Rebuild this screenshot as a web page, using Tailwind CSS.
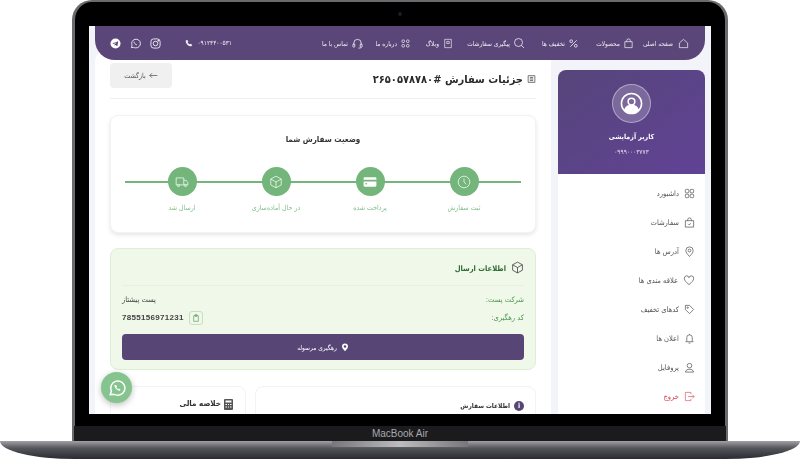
<!DOCTYPE html>
<html lang="fa">
<head>
<meta charset="UTF-8">
<title>جزئیات سفارش</title>
<script src="https://cdn.jsdelivr.net/npm/@tailwindcss/browser@4"></script>
</head>
<body class="bg-white">
<div class="relative w-[800px] h-[459px] overflow-hidden bg-white font-['DejaVu_Sans_Condensed','DejaVu_Sans',sans-serif]">

  <!-- laptop lid -->
  <div class="mx-[72px] w-[656px] h-[441px] rounded-t-[20px] bg-black border-x-[3px] border-t-[2px] border-[#6a6a6e] flex flex-col">
    <div class="h-[24px] flex items-center justify-center shrink-0"><span class="w-[4px] h-[4px] rounded-full bg-[#1c1c22]"></span></div>

    <!-- screen -->
    <div dir="rtl" class="mx-[14px] w-[622px] h-[388px] shrink-0 overflow-hidden bg-[#f3f4f9] px-[6px] blur-[0.45px]">
      <!-- top nav -->
      <div class="relative z-10 h-[34px] bg-[#5a4678] rounded-b-[20px] flex items-center pr-[16px] text-white/90 text-[6.5px]">
        <div class="flex items-center gap-[5px] w-[52px]">
          <svg class="w-[11px] h-[11px] shrink-0" viewBox="0 0 24 24" fill="none" stroke="currentColor" stroke-width="1.6"><path d="M3 11l9-8 9 8v10H3z"/></svg><span class="pt-[4px]">صفحه اصلی</span>
        </div>
        <div class="flex items-center gap-[3px] w-[54px] mr-[3px]">
          <svg class="w-[11px] h-[11px] shrink-0" viewBox="0 0 24 24" fill="none" stroke="currentColor" stroke-width="1.6"><path d="M4 8h16v13H4zM8 8V6a4 4 0 018 0v2"/></svg><span class="pt-[4px]">محصولات</span>
        </div>
        <div class="flex items-center gap-[3px] w-[54px] mr-[1px]">
          <svg class="w-[11px] h-[11px] shrink-0" viewBox="0 0 24 24" fill="none" stroke="currentColor" stroke-width="1.8"><path d="M19 5L5 19"/><circle cx="7" cy="7" r="3"/><circle cx="17" cy="17" r="3"/></svg><span class="pt-[4px]">تخفیف ها</span>
        </div>
        <div class="flex items-center gap-[3px] w-[72px]">
          <svg class="w-[12px] h-[12px] shrink-0" viewBox="0 0 24 24" fill="none" stroke="currentColor" stroke-width="1.6"><circle cx="11" cy="11" r="8"/><path d="M17 17l5 5"/></svg><span class="pt-[4px]">پیگیری سفارشات</span>
        </div>
        <div class="flex items-center gap-[4px] w-[42px]">
          <svg class="w-[10px] h-[11px] shrink-0" viewBox="0 0 24 24" fill="none" stroke="currentColor" stroke-width="1.6"><path d="M4 2h16v20H4zM9 7h6v5H9z"/></svg><span class="pt-[4px]">وبلاگ</span>
        </div>
        <div class="flex items-center gap-[3px] w-[48px]">
          <svg class="w-[11px] h-[11px] shrink-0" viewBox="0 0 24 24" fill="none" stroke="currentColor" stroke-width="1.6"><circle cx="7" cy="7" r="3"/><circle cx="17" cy="7" r="3"/><circle cx="7" cy="17" r="3"/><circle cx="17" cy="17" r="3"/></svg><span class="pt-[4px]">درباره ما</span>
        </div>
        <div class="flex items-center gap-[4px]">
          <svg class="w-[11px] h-[11px] shrink-0" viewBox="0 0 24 24" fill="none" stroke="currentColor" stroke-width="1.8"><path d="M4 15v-4a8 8 0 0116 0v4"/><rect x="2" y="13" width="4" height="7" rx="1.5"/><rect x="18" y="13" width="4" height="7" rx="1.5"/><path d="M20 20c0 2-3 2-6 2"/></svg><span class="pt-[4px]">تماس با ما</span>
        </div>
        <div class="flex items-center gap-[4px] mr-[90px] text-[6.5px]">
          <span class="pt-[2px]">۰۹۱۲۴۴۰۰۵۳۱</span>
          <svg class="w-[8px] h-[8px] shrink-0" viewBox="0 0 24 24" fill="currentColor"><path d="M6 2l4 5-2 3c1 3 3 5 6 6l3-2 5 4-3 4C10 22 2 14 2 5z"/></svg>
        </div>
        <div class="flex items-center gap-[9px] mr-[24px]">
          <svg class="w-[11px] h-[11px]" viewBox="0 0 24 24" fill="none" stroke="currentColor" stroke-width="2"><rect x="2" y="2" width="20" height="20" rx="6"/><circle cx="12" cy="12" r="5"/><circle cx="18" cy="6" r="1" fill="currentColor"/></svg>
          <svg class="w-[11px] h-[11px]" viewBox="0 0 24 24" fill="none" stroke="currentColor" stroke-width="2"><path d="M3 21l1.500-5A9.500 9.500 0 1112 21.500a9.500 9.500 0 01-4-1z"/><path d="M9 8c-1 2 3 7 6 7"/></svg>
          <svg class="w-[11px] h-[11px]" viewBox="0 0 24 24"><circle cx="12" cy="12" r="11" fill="#fff"/><path d="M5 12l13-5-2 11-4-3-2 2v-3l5-5-7 4z" fill="#5a4678"/></svg>
        </div>
      </div>

      <div class="flex gap-[7px] -mt-[10px]">
        <!-- sidebar -->
        <div class="w-[147px] shrink-0 pt-[20px]">
          <div class="bg-white rounded-[8px] h-[360px] overflow-hidden">
            <div class="h-[104px] bg-linear-to-br from-[#56457a] to-[#614295] flex flex-col items-center pt-[14px] text-white">
              <div class="w-[39px] h-[39px] rounded-full bg-white/20 border border-white/40 flex items-center justify-center">
                <svg class="w-[23px] h-[23px]" viewBox="0 0 24 24" fill="none" stroke="#fff" stroke-width="1.6"><circle cx="12" cy="12" r="10.500"/><circle cx="12" cy="10" r="3.500"/><path d="M5 19c1-4 4-5 7-5s6 1 7 5c-2 2-4 3-7 3s-5-1-7-3z" fill="#fff"/></svg>
              </div>
              <div class="mt-[8px] text-[7px] font-bold leading-[12px]">کاربر آزمایشی</div>
              <div class="mt-[5px] text-[6.5px] leading-[8px] text-white/80">۰۹۹۹۰۰۰۳۷۷۳</div>
            </div>
            <div class="pt-[5px] text-[7.5px] text-[#555]">
              <div class="h-[29px] flex items-center gap-[5px] pr-[10px]"><svg class="w-[11px] h-[11px] shrink-0" viewBox="0 0 24 24" fill="none" stroke="#555" stroke-width="1.6"><rect x="3" y="3" width="7.500" height="7.500" rx="2"/><rect x="13.500" y="3" width="7.500" height="7.500" rx="2"/><rect x="3" y="13.500" width="7.500" height="7.500" rx="2"/><rect x="13.500" y="13.500" width="7.500" height="7.500" rx="2"/></svg><span>داشبورد</span></div>
              <div class="h-[29px] flex items-center gap-[5px] pr-[10px]"><svg class="w-[11px] h-[11px] shrink-0" viewBox="0 0 24 24" fill="none" stroke="#555" stroke-width="1.6"><path d="M3 8h18v14H3zM8 8V6a4 4 0 018 0v2M9 15l2 2 4-3"/></svg><span>سفارشات</span></div>
              <div class="h-[29px] flex items-center gap-[5px] pr-[10px]"><svg class="w-[11px] h-[11px] shrink-0" viewBox="0 0 24 24" fill="none" stroke="#555" stroke-width="1.6"><path d="M12 23c-5-6-8-9-8-13a8 8 0 0116 0c0 4-3 7-8 13z"/><circle cx="12" cy="10" r="3"/></svg><span>آدرس ها</span></div>
              <div class="h-[29px] flex items-center gap-[5px] pr-[10px]"><svg class="w-[12px] h-[11px] shrink-0" viewBox="0 0 24 24" fill="none" stroke="#555" stroke-width="1.6"><path d="M12 21C5 15 2 12 2 8a5 5 0 0110-2 5 5 0 0110 2c0 4-3 7-10 13z"/></svg><span>علاقه مندی ها</span></div>
              <div class="h-[29px] flex items-center gap-[5px] pr-[10px]"><svg class="w-[11px] h-[11px] shrink-0" viewBox="0 0 24 24" fill="none" stroke="#555" stroke-width="1.6"><path d="M3 3h9l9 9-9 9-9-9z"/><circle cx="8" cy="8" r="1.500"/></svg><span>کدهای تخفیف</span></div>
              <div class="h-[29px] flex items-center gap-[5px] pr-[10px]"><svg class="w-[11px] h-[11px] shrink-0" viewBox="0 0 24 24" fill="none" stroke="#555" stroke-width="1.6"><path d="M6 17V10a6 6 0 0112 0v7l2 2H4zM10 22h4M12 2v2"/></svg><span>اعلان ها</span></div>
              <div class="h-[29px] flex items-center gap-[5px] pr-[10px]"><svg class="w-[11px] h-[11px] shrink-0" viewBox="0 0 24 24" fill="none" stroke="#555" stroke-width="1.6"><circle cx="12" cy="8" r="5"/><path d="M3 22c1-5 5-6 9-6s8 1 9 6z"/></svg><span>پروفایل</span></div>
              <div class="h-[29px] flex items-center gap-[5px] pr-[10px] text-[#d9434f]"><svg class="w-[11px] h-[11px] shrink-0" viewBox="0 0 24 24" fill="none" stroke="#e0606b" stroke-width="1.6"><path d="M15 7V3H3v18h12v-4M9 12h13M18 8l4 4-4 4"/></svg><span>خروج</span></div>
            </div>
          </div>
        </div>

        <!-- main -->
        <div class="w-[456px] shrink-0 bg-white rounded-tl-[12px] pt-[13px] px-[15px] h-[400px]">
          <div class="flex items-center justify-between h-[25px] mb-[10px] relative">
            <div class="flex items-center gap-[4px] mt-[7px]">
              <svg class="w-[9px] h-[10px] shrink-0" viewBox="0 0 24 24" fill="#eee" stroke="#555" stroke-width="2"><path d="M3 3h18v18H3zM8 8h8M8 12h8M8 16h8"/></svg>
              <h1 class="text-[11px] font-bold text-[#2b2b2b] pt-[2px]">جزئیات سفارش #۲۶۵۰۵۷۸۷۸۰</h1>
            </div>
            <div class="w-[62px] h-[25px] rounded-[4px] bg-[#f0f0f0] flex items-center justify-center gap-[3px] text-[7px] text-[#555]">
              <svg class="w-[9px] h-[9px]" viewBox="0 0 24 24" fill="none" stroke="#555" stroke-width="2"><path d="M22 12H2M8 6l-6 6 6 6"/></svg>
              <span class="pt-[2px]">بازگشت</span>
            </div>
          </div>
          <div class="h-px bg-[#eef0f3]"></div>

          <!-- status -->
          <div class="mt-[16px] h-[118px] rounded-[8px] bg-white border border-[#f3f3f3] shadow-[0_2px_4px_rgba(0,0,0,0.1)] pt-[18px] relative">
            <div class="text-center text-[8px] font-bold text-[#333] leading-[12px]">وضعیت سفارش شما</div>
            <div class="absolute left-[14px] right-[14px] top-[65px] h-[2px] bg-[#73b57b]"></div>
            <div class="relative mt-[21px] px-[24px] grid grid-cols-4 text-center text-[7px] text-[#7fbf88]">
              <div class="flex flex-col items-center"><div class="w-[29px] h-[29px] rounded-full bg-[#73b57b] flex items-center justify-center"><svg class="w-[14px] h-[14px]" viewBox="0 0 24 24" fill="none" stroke="#e6f3e7" stroke-width="1.500"><circle cx="12" cy="12" r="10"/><path d="M12 6v6l4 4"/></svg></div><div class="mt-[7px] leading-[10px]">ثبت سفارش</div></div>
              <div class="flex flex-col items-center"><div class="w-[29px] h-[29px] rounded-full bg-[#73b57b] flex items-center justify-center"><svg class="w-[14px] h-[14px]" viewBox="0 0 24 24"><path d="M3 4h18a2 2 0 012 2v2H1V6a2 2 0 012-2zM1 11h22v7a2 2 0 01-2 2H3a2 2 0 01-2-2z" fill="#fff"/><rect x="4" y="14" width="3" height="2" fill="#73b57b"/></svg></div><div class="mt-[7px] leading-[10px]">پرداخت شده</div></div>
              <div class="flex flex-col items-center"><div class="w-[29px] h-[29px] rounded-full bg-[#73b57b] flex items-center justify-center"><svg class="w-[14px] h-[14px]" viewBox="0 0 24 24" fill="none" stroke="#e6f3e7" stroke-width="1.500"><path d="M12 2l9 5v10l-9 5-9-5V7zM3 7l9 5 9-5M12 12v10"/></svg></div><div class="mt-[7px] leading-[10px]">در حال آماده‌سازی</div></div>
              <div class="flex flex-col items-center"><div class="w-[29px] h-[29px] rounded-full bg-[#73b57b] flex items-center justify-center"><svg class="w-[14px] h-[14px]" viewBox="0 0 24 24" fill="none" stroke="#e6f3e7" stroke-width="1.500"><path d="M2 5h13v12H2zM15 9h4l3 4v4h-7"/><circle cx="6" cy="18" r="2"/><circle cx="18" cy="18" r="2"/></svg></div><div class="mt-[7px] leading-[10px]">ارسال شد</div></div>
            </div>
          </div>

          <!-- shipping -->
          <div class="mt-[15px] h-[122px] rounded-[8px] bg-[#eff8e9] border border-[#dfeed6] px-[11px]">
            <div class="h-[37px] flex items-center gap-[5px] border-b border-[#e6f2de]">
              <svg class="w-[13px] h-[13px]" viewBox="0 0 24 24" fill="none" stroke="#444" stroke-width="1.500"><path d="M12 2l9 5v10l-9 5-9-5V7zM3 7l9 5 9-5M12 12v10"/></svg>
              <span class="text-[7.500px] font-bold text-[#2e6b32] pt-[4px]">اطلاعات ارسال</span>
            </div>
            <div class="flex items-center justify-between h-[18px] mt-[5px] text-[7.5px]">
              <span class="text-[#4f9a55]">شرکت پست:</span><span class="text-[#444]">پست پیشتاز</span>
            </div>
            <div class="flex items-center justify-between h-[18px] text-[7.5px]">
              <span class="text-[#4f9a55]">کد رهگیری:</span>
              <div dir="ltr" class="flex items-center gap-[5px]">
                <span class="font-bold text-[8px] tracking-[0.3px] text-[#444] font-['Liberation_Sans',sans-serif]">7855156971231</span>
                <div class="w-[14px] h-[14px] rounded-[3px] border border-[#c8e0bd] flex items-center justify-center"><svg class="w-[8px] h-[8px]" viewBox="0 0 24 24" fill="none" stroke="#5a9a60" stroke-width="2"><path d="M5 5h14v17H5zM9 2h6v5H9z"/></svg></div>
              </div>
            </div>
            <div class="mt-[7px] h-[26px] rounded-[4px] bg-[#574575] flex items-center justify-center gap-[4px] text-white text-[6.5px]">
              <svg class="w-[8px] h-[9px]" viewBox="0 0 24 24" fill="#fff"><path fill-rule="evenodd" d="M12 23C6 16 3 13 3 9a9 9 0 0118 0c0 4-3 7-9 14zm0-10a4 4 0 100-8 4 4 0 000 8z"/></svg>
              <span class="pt-[3px]">رهگیری مرسوله</span>
            </div>
          </div>

          <!-- bottom cards -->
          <div class="mt-[16px] flex gap-[9px]">
            <div class="w-[281px] h-[60px] rounded-[8px] bg-white border border-[#f3f3f3] pt-[13px] px-[11px]">
              <div class="flex items-center gap-[4px]">
                <span class="w-[10px] h-[10px] rounded-full bg-[#574575] text-white text-[7px] font-bold leading-[10px] text-center">i</span>
                <span class="text-[6.5px] font-bold text-[#333] pt-[2px]">اطلاعات سفارش</span>
              </div>
            </div>
            <div class="w-[136px] h-[60px] rounded-[8px] bg-white border border-[#f3f3f3] pt-[11px] px-[12px]">
              <div class="flex items-center gap-[3px]">
                <svg class="w-[9px] h-[11px]" viewBox="0 0 18 22" fill="#555"><path fill-rule="evenodd" d="M2 0h14a2 2 0 012 2v18a2 2 0 01-2 2H2a2 2 0 01-2-2V2a2 2 0 012-2zm1 3v4h12V3zm0 7v2h3v-2zm5 0v2h2v-2zm4 0v2h3v-2zM3 15v2h3v-2zm5 0v2h2v-2zm4 0v2h3v-2z"/></svg>
                <span class="text-[8px] font-bold text-[#333]">خلاصه مالی</span>
              </div>
            </div>
          </div>
        </div>
      </div>
    </div>

    <!-- chin -->
    <div class="flex-1 mt-[12px] -mx-[1px] bg-[#1b1b1d] flex items-center justify-center text-[10px] text-[#a9a9ad] font-['Liberation_Sans',sans-serif]">MacBook Air</div>
  </div>

  <!-- base -->
  <div class="h-[18px] rounded-bl-[75px_18px] rounded-br-[75px_18px] bg-linear-to-b from-[#a2a2a6] via-[#55555c] via-40% to-[#2b2b31] flex justify-center">
    <div class="w-[136px] h-[6px] bg-linear-to-r from-[#77777b] via-[#bdbdc0] to-[#77777b]"></div>
  </div>

  <!-- floating whatsapp -->
  <div class="absolute left-[101px] top-[372px] w-[31px] h-[31px] rounded-full bg-[#85c48e] shadow-[0_2px_6px_rgba(0,0,0,0.25)] flex items-center justify-center">
    <svg class="w-[18px] h-[18px]" viewBox="0 0 24 24" fill="none" stroke="#fff" stroke-width="2"><path d="M3 21l1.500-5A9.500 9.500 0 1112 21.500a9.500 9.500 0 01-4-1z"/><path d="M8.500 8c-.5 3 4 8 7.500 7.500l.5-2-2-1-1 1c-1-.5-2-1.500-2.500-2.500l1-1-1-2z" fill="#fff" stroke="none"/></svg>
  </div>
</div>
</body>
</html>
